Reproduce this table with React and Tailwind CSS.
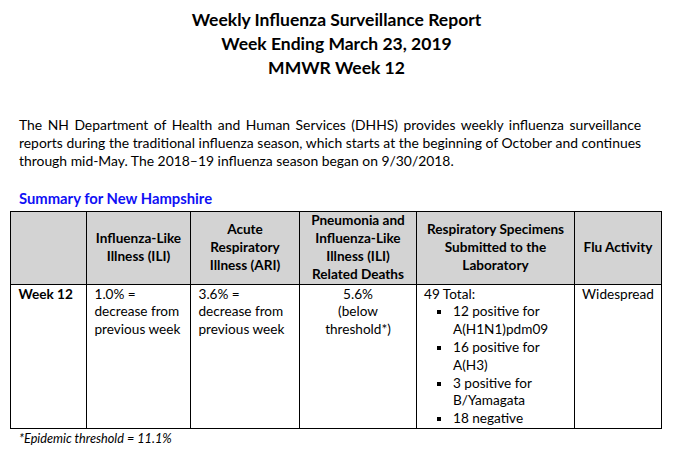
const specimens = [
  ['12 positive for', 'A(H1N1)pdm09'],
  ['16 positive for', 'A(H3)'],
  ['3 positive for', 'B/Yamagata'],
  ['18 negative'],
];

function Bullet({ lines }) {
  return (
    <li className="flex">
      <span className="w-[29px] shrink-0 flex justify-center pl-[1px] pt-[7px]">
        <span className="block w-[4px] h-[4px] bg-black" />
      </span>
      <span>
        {lines.map((l) => (
          <span key={l} className="block">{l}</span>
        ))}
      </span>
    </li>
  );
}

export default function App() {
  return (
    <div className="w-[673px] h-[452px] bg-white text-black font-['Lato',sans-serif] overflow-hidden">
      <div className="pt-2 text-center font-bold text-[17.5px] leading-[24px]">
        <div>Weekly Influenza Surveillance Report</div>
        <div>Week Ending March 23, 2019</div>
        <div>MMWR Week 12</div>
      </div>

      <p className="mt-9 ml-[19px] w-[622px] text-justify text-[13.9px] leading-[17.8px]">
        The NH Department of Health and Human Services (DHHS) provides weekly influenza surveillance
        reports during the traditional influenza season, which starts at the beginning of October and continues
        through mid-May. The 2018–19 influenza season began on 9/30/2018.
      </p>

      <h2 className="mt-[20px] ml-[19px] text-[14.8px] leading-[18px] font-bold text-[#1010f5]">
        Summary for New Hampshire
      </h2>

      <table className="mt-[4px] ml-[10px] w-[651px] table-fixed border-collapse border border-black text-[13.6px] leading-[17.8px]">
        <colgroup>
          <col className="w-[76px]" />
          <col className="w-[104px]" />
          <col className="w-[109px]" />
          <col className="w-[117px]" />
          <col className="w-[158px]" />
          <col className="w-[87px]" />
        </colgroup>
        <thead>
          <tr className="bg-[#d3d3d3] h-[72px] font-bold text-center align-middle">
            <th className="border border-black" />
            <th className="border border-black px-[6px]">
              Influenza-Like<br />Illness (ILI)
            </th>
            <th className="border border-black px-[6px]">
              Acute<br />Respiratory<br />Illness (ARI)
            </th>
            <th className="border border-black px-[4px]">
              Pneumonia and<br />Influenza-Like<br />Illness (ILI)<br />Related Deaths
            </th>
            <th className="border border-black px-[6px]">
              Respiratory Specimens<br />Submitted to the<br />Laboratory
            </th>
            <th className="border border-black px-[4px]">Flu Activity</th>
          </tr>
        </thead>
        <tbody>
          <tr className="align-top">
            <td className="border border-black pl-[7.5px] pt-[1px] font-bold">Week 12</td>
            <td className="border border-black pl-[7.5px] pr-[2px] pt-[1px]">
              1.0% =<br />decrease from<br />previous week
            </td>
            <td className="border border-black pl-[7.5px] pr-[2px] pt-[1px]">
              3.6% =<br />decrease from<br />previous week
            </td>
            <td className="border border-black pt-[1px] text-center">
              5.6%<br />(below<br />threshold*)
            </td>
            <td className="border border-black pl-[7px] pt-[1px]">
              <div>49 Total:</div>
              <ul>
                {specimens.map((s) => (
                  <Bullet key={s[0]} lines={s} />
                ))}
              </ul>
            </td>
            <td className="border border-black pt-[1px] text-center">Widespread</td>
          </tr>
        </tbody>
      </table>

      <p className="mt-[1px] ml-[19px] italic text-[12.7px] leading-[16px]">
        *Epidemic threshold = 11.1%
      </p>
    </div>
  );
}
